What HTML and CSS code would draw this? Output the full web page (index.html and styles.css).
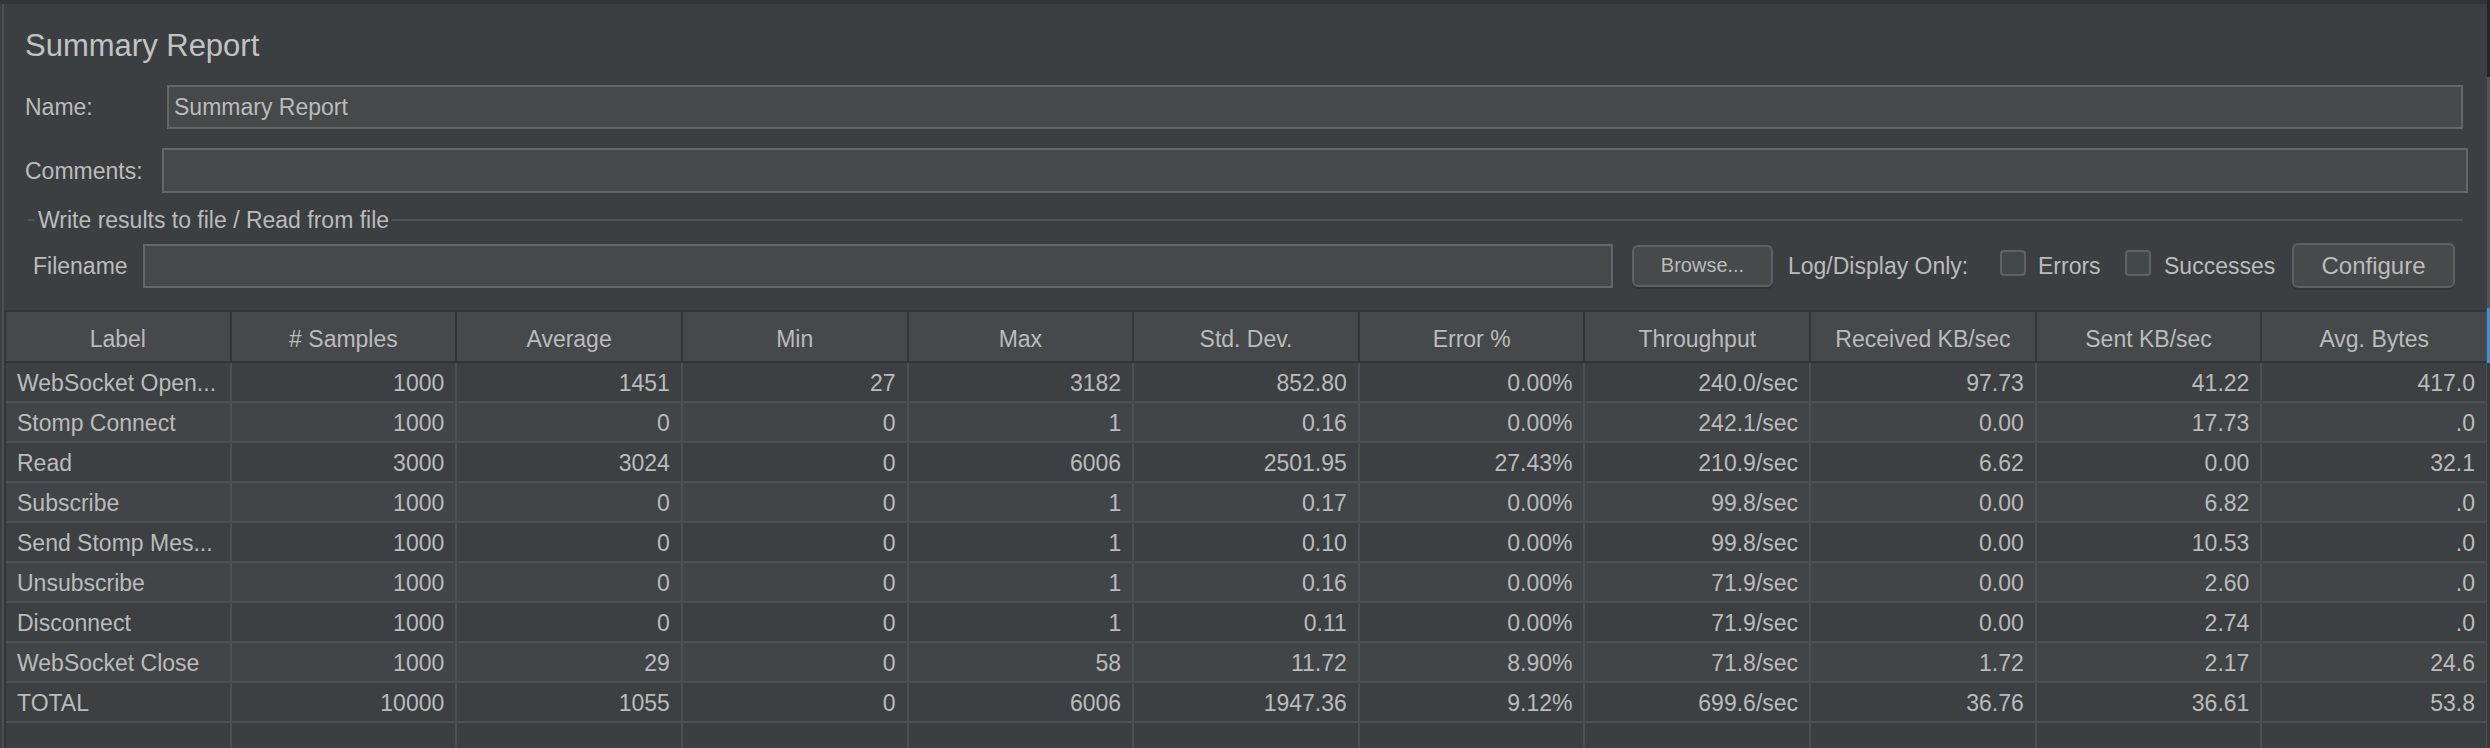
FILE: index.html
```html
<!DOCTYPE html>
<html>
<head>
<meta charset="utf-8">
<title>Summary Report</title>
<link rel="stylesheet" href="styles.css">
</head>
<body>
<div class="window">
  <div class="main">
    <div class="topbar"></div>
    <div class="panel">
      <div class="title">Summary Report</div>

      <div class="form-row name-row">
        <div class="label name-label">Name:</div>
        <div class="field">Summary Report</div>
      </div>

      <div class="form-row comments-row">
        <div class="label comments-label">Comments:</div>
        <div class="field"></div>
      </div>

      <div class="group-title">
        <div class="dash"></div>
        <div class="label group-text">Write results to file / Read from file</div>
        <div class="rule"></div>
      </div>

      <div class="form-row file-row">
        <div class="label file-label">Filename</div>
        <div class="field"></div>
        <div class="button browse">Browse...</div>
        <div class="label log-text">Log/Display Only:</div>
        <div class="checkbox"></div>
        <div class="label errors-text">Errors</div>
        <div class="checkbox"></div>
        <div class="label succ-text">Successes</div>
        <div class="button configure">Configure</div>
      </div>

      <div class="table">
        <div class="grid head">
          <div class="hc">Label</div><div class="hc"># Samples</div><div class="hc">Average</div><div class="hc">Min</div><div class="hc">Max</div><div class="hc">Std. Dev.</div><div class="hc">Error %</div><div class="hc">Throughput</div><div class="hc">Received KB/sec</div><div class="hc">Sent KB/sec</div><div class="hc">Avg. Bytes</div>
        </div>
        <div class="grid row odd">
          <div class="c l">WebSocket Open...</div><div class="c">1000</div><div class="c">1451</div><div class="c">27</div><div class="c">3182</div><div class="c">852.80</div><div class="c">0.00%</div><div class="c">240.0/sec</div><div class="c">97.73</div><div class="c">41.22</div><div class="c">417.0</div>
        </div>
        <div class="grid row even">
          <div class="c l">Stomp Connect</div><div class="c">1000</div><div class="c">0</div><div class="c">0</div><div class="c">1</div><div class="c">0.16</div><div class="c">0.00%</div><div class="c">242.1/sec</div><div class="c">0.00</div><div class="c">17.73</div><div class="c">.0</div>
        </div>
        <div class="grid row odd">
          <div class="c l">Read</div><div class="c">3000</div><div class="c">3024</div><div class="c">0</div><div class="c">6006</div><div class="c">2501.95</div><div class="c">27.43%</div><div class="c">210.9/sec</div><div class="c">6.62</div><div class="c">0.00</div><div class="c">32.1</div>
        </div>
        <div class="grid row even">
          <div class="c l">Subscribe</div><div class="c">1000</div><div class="c">0</div><div class="c">0</div><div class="c">1</div><div class="c">0.17</div><div class="c">0.00%</div><div class="c">99.8/sec</div><div class="c">0.00</div><div class="c">6.82</div><div class="c">.0</div>
        </div>
        <div class="grid row odd">
          <div class="c l">Send Stomp Mes...</div><div class="c">1000</div><div class="c">0</div><div class="c">0</div><div class="c">1</div><div class="c">0.10</div><div class="c">0.00%</div><div class="c">99.8/sec</div><div class="c">0.00</div><div class="c">10.53</div><div class="c">.0</div>
        </div>
        <div class="grid row even">
          <div class="c l">Unsubscribe</div><div class="c">1000</div><div class="c">0</div><div class="c">0</div><div class="c">1</div><div class="c">0.16</div><div class="c">0.00%</div><div class="c">71.9/sec</div><div class="c">0.00</div><div class="c">2.60</div><div class="c">.0</div>
        </div>
        <div class="grid row odd">
          <div class="c l">Disconnect</div><div class="c">1000</div><div class="c">0</div><div class="c">0</div><div class="c">1</div><div class="c">0.11</div><div class="c">0.00%</div><div class="c">71.9/sec</div><div class="c">0.00</div><div class="c">2.74</div><div class="c">.0</div>
        </div>
        <div class="grid row even">
          <div class="c l">WebSocket Close</div><div class="c">1000</div><div class="c">29</div><div class="c">0</div><div class="c">58</div><div class="c">11.72</div><div class="c">8.90%</div><div class="c">71.8/sec</div><div class="c">1.72</div><div class="c">2.17</div><div class="c">24.6</div>
        </div>
        <div class="grid row odd">
          <div class="c l">TOTAL</div><div class="c">10000</div><div class="c">1055</div><div class="c">0</div><div class="c">6006</div><div class="c">1947.36</div><div class="c">9.12%</div><div class="c">699.6/sec</div><div class="c">36.76</div><div class="c">36.61</div><div class="c">53.8</div>
        </div>
        <div class="grid filler">
          <div class="f"></div><div class="f"></div><div class="f"></div><div class="f"></div><div class="f"></div><div class="f"></div><div class="f"></div><div class="f"></div><div class="f"></div><div class="f"></div><div class="f"></div>
        </div>
      </div>
    </div>
  </div>
  <div class="edge">
    <div class="e1"></div>
    <div class="e2"></div>
    <div class="e3"></div>
    <div class="e4"></div>
  </div>
</div>
</body>
</html>
```

FILE: styles.css
```css
* { box-sizing: border-box; }

html, body {
  margin: 0;
  padding: 0;
  background: #3c3f41;
}

body {
  width: 2490px;
  height: 748px;
  overflow: hidden;
  font-family: "Liberation Sans", Arial, sans-serif;
  color: #bbbbbb;
}

.window {
  display: flex;
  width: 2490px;
  height: 748px;
}

.main {
  flex: 1;
  display: flex;
  flex-direction: column;
  min-width: 0;
}

.topbar {
  height: 4px;
  background: #333537;
  flex: none;
}

.panel {
  flex: 1;
  margin-left: 2px;
  border-left: 2px solid #4d5052;
  display: flex;
  flex-direction: column;
  min-height: 0;
}

.title {
  margin-top: 24px;
  padding-left: 21px;
  font-size: 31px;
  line-height: 36px;
  height: 36px;
  color: #c2c2c2;
  white-space: nowrap;
}

.label {
  font-size: 23px;
  line-height: 26px;
  white-space: nowrap;
  flex: none;
}

.form-row {
  display: flex;
  align-items: center;
  flex: none;
}

.field {
  flex: 1;
  height: 44px;
  background: #45494a;
  border: 2px solid #646769;
  font-size: 23px;
  display: flex;
  align-items: center;
  padding-left: 5px;
  white-space: nowrap;
  min-width: 0;
}

.name-row {
  margin-top: 21px;
  height: 44px;
  padding-left: 21px;
  padding-right: 24px;
}
.name-label { width: 142px; }

.comments-row {
  margin-top: 19px;
  height: 45px;
  padding-left: 21px;
  padding-right: 19px;
}
.comments-row .field { height: 45px; }
.comments-label { width: 137px; }

.group-title {
  margin-top: 13px;
  height: 27px;
  display: flex;
  align-items: center;
  padding-left: 24px;
  padding-right: 24px;
  flex: none;
}
.dash {
  width: 7px;
  height: 2px;
  background: #515456;
  flex: none;
}
.group-text {
  margin-left: 3px;
  margin-right: 3px;
}
.rule {
  flex: 1;
  height: 2px;
  background: #515456;
}

.file-row {
  margin-top: 10px;
  height: 45px;
  padding-left: 29px;
  padding-right: 32px;
}
.file-label { width: 110px; }

.button {
  flex: none;
  display: flex;
  align-items: center;
  justify-content: center;
  background: #464a4b;
  border: 2px solid #5d6163;
  border-radius: 6px;
  box-shadow: 0 2px 0 #323436;
  white-space: nowrap;
}
.browse {
  margin-left: 19px;
  width: 141px;
  height: 42px;
  font-size: 20px;
}
.configure {
  width: 163px;
  height: 45px;
  font-size: 24px;
}

.log-text { margin-left: 15px; width: 212px; }
.errors-text { margin-left: 12px; width: 87px; }
.succ-text { margin-left: 13px; width: 128px; }

.checkbox {
  flex: none;
  width: 26px;
  height: 26px;
  border: 2px solid #5f6264;
  border-radius: 4px;
  background: #43484a;
  margin-bottom: 6px;
}

.table {
  margin-top: 22px;
  flex: 1;
  display: flex;
  flex-direction: column;
  border-left: 2px solid #323436;
  border-right: 1px solid #4d5052;
  min-height: 0;
}

.grid {
  display: grid;
  grid-template-columns: repeat(11, 1fr);
  column-gap: 2px;
  flex: none;
}

.head {
  background: #323436;
  border-top: 2px solid #323436;
  border-bottom: 2px solid #323436;
  height: 53px;
}
.hc {
  background: #46494b;
  font-size: 23px;
  display: flex;
  align-items: center;
  justify-content: center;
  padding-top: 5px;
  white-space: nowrap;
  overflow: hidden;
}

.row {
  height: 40px;
  background: #4d5052;
  border-bottom: 2px solid #4d5052;
}
.c {
  font-size: 23px;
  display: flex;
  align-items: center;
  justify-content: flex-end;
  padding-right: 11px;
  padding-top: 3px;
  white-space: nowrap;
  overflow: hidden;
}
.c.l {
  justify-content: flex-start;
  padding-left: 11px;
  padding-right: 0;
}
.odd .c { background: #3d4042; }
.even .c { background: #424547; }

.filler {
  flex: 1;
  background: #4d5052;
}
.f { background: #3c3f41; }

.edge {
  width: 3px;
  flex: none;
  display: flex;
  flex-direction: column;
}
.e1 { height: 77px; background: #232425; }
.e2 { height: 231px; background: #4f5254; }
.e3 { height: 55px; background: #4a8ccc; }
.e4 { flex: 1; background: #393b3d; }
```
